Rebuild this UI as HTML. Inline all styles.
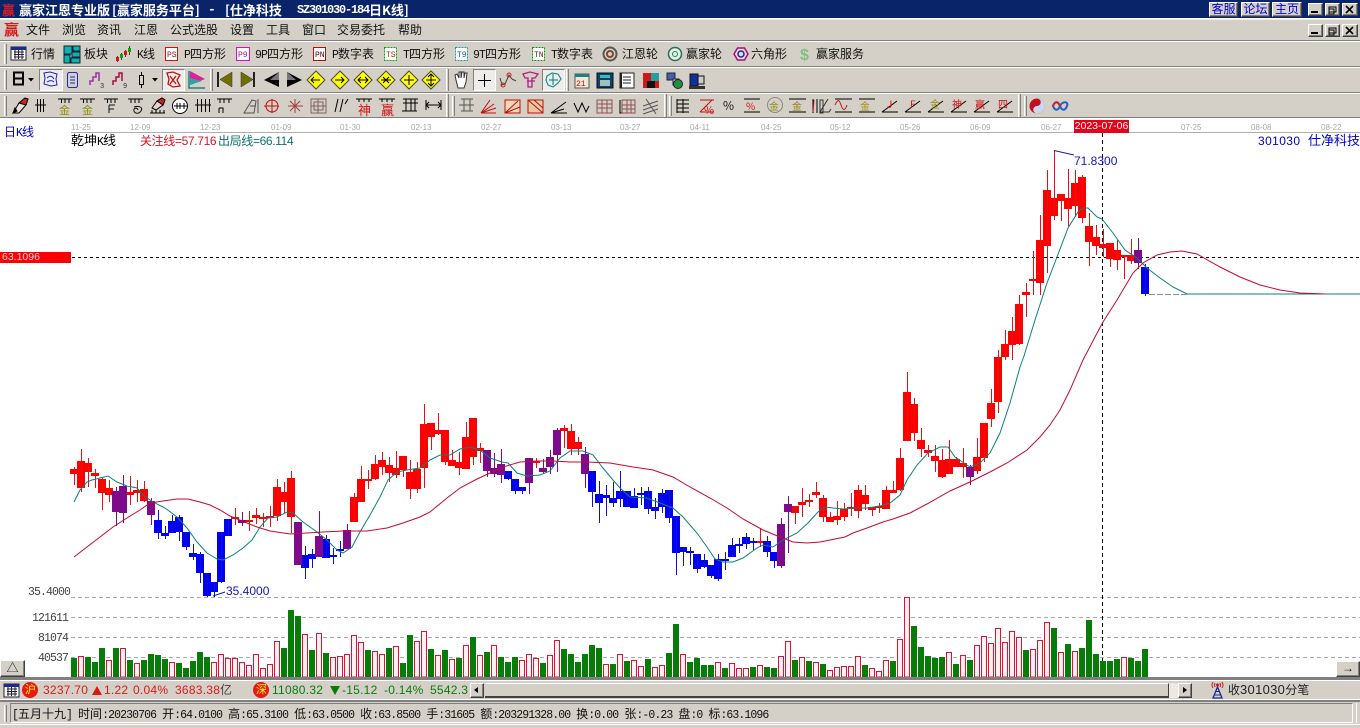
<!DOCTYPE html>
<html><head><meta charset="utf-8"><style>
html,body{margin:0;padding:0}
body{width:1360px;height:728px;background:#d4d0c8;overflow:hidden;position:relative;font:12px/14px "Liberation Sans","WenQuanYi Zen Hei","Noto Sans CJK SC",sans-serif;color:#111}
.t{position:absolute;white-space:pre}
i{font:11.5px/14px "Liberation Mono",monospace;letter-spacing:-.9px;font-style:normal}
.a{position:absolute}
.h{position:absolute;left:0;width:1360px;height:1px;background:#808080;border-bottom:1px solid #fff}
.g{position:absolute;width:1px;border-left:1px solid #fff;border-right:1px solid #808080}
.b{position:absolute;box-sizing:border-box;background:#d4d0c8;border:1px solid;border-color:#fff #404040 #404040 #fff;box-shadow:inset -1px -1px 0 #808080;text-align:center}
.p{position:absolute;box-sizing:border-box;background:#efedea;border:1px solid;border-color:#808080 #fff #fff #808080}
.l{font-size:12px;color:#00c;line-height:13px}
.ax{position:absolute;top:123px;font:8px/9px "Liberation Sans",sans-serif;color:#a8a8a8}
.yl{position:absolute;color:#444;text-align:right;width:40px}
</style></head><body>

<div class="a" style="left:0;top:0;width:1360px;height:18px;background:#0a246a"></div>
<div class="t" style="left:2px;top:3px;color:#e02020;font:bold 13px/14px 'WenQuanYi Zen Hei','Noto Sans CJK SC',sans-serif">赢</div>
<div class="t" style="left:19px;top:2px;color:#fff;font:bold 13px/15px 'WenQuanYi Zen Hei','Noto Sans CJK SC',sans-serif">赢家江恩专业版</div>
<div class="t" style="left:112px;top:2px;color:#fff;font:bold 13px/15px 'WenQuanYi Zen Hei','Noto Sans CJK SC',sans-serif">[赢家服务平台]</div>
<div class="t" style="left:208px;top:2px;color:#fff;font:bold 13px/15px 'Liberation Mono',monospace">-</div>
<div class="t" style="left:225px;top:2px;color:#fff;font:bold 13px/15px 'WenQuanYi Zen Hei','Noto Sans CJK SC',sans-serif">[仕净科技</div>
<div class="t" style="left:297px;top:3px;color:#fff;font:bold 12px/15px 'Liberation Mono',monospace;letter-spacing:-1.2px">SZ301030-184</div>
<div class="t" style="left:369px;top:2px;color:#fff;font:bold 13px/15px 'WenQuanYi Zen Hei','Noto Sans CJK SC',sans-serif">日K线]</div>

<div class="b l" style="left:1209px;top:2px;width:29px;height:15px;color:#0000d0">客服</div>
<div class="b l" style="left:1241px;top:2px;width:29px;height:15px;color:#0000d0">论坛</div>
<div class="b l" style="left:1272px;top:2px;width:30px;height:15px;color:#0000d0">主页</div>
<div class="b" style="left:1308px;top:3px;width:15px;height:13px"></div>
<div class="b" style="left:1325px;top:3px;width:15px;height:13px"></div>
<div class="b" style="left:1342px;top:3px;width:16px;height:13px"></div>
<div class="b" style="left:1308px;top:24px;width:15px;height:13px"></div>
<div class="b" style="left:1325px;top:24px;width:15px;height:13px"></div>
<div class="b" style="left:1342px;top:24px;width:16px;height:13px"></div>

<div class="h" style="top:18px;background:#fff;border-bottom:1px solid #eee"></div>
<div class="h" style="top:40px"></div>
<div class="h" style="top:66px"></div>
<div class="h" style="top:92px"></div>
<div class="h" style="top:117px"></div>

<div class="t" style="left:4px;top:21px;color:#d01818;font:bold 15px/18px 'WenQuanYi Zen Hei','Noto Sans CJK SC',sans-serif">赢</div>
<div class="t" style="left:26px;top:23px">文件</div>
<div class="t" style="left:62px;top:23px">浏览</div>
<div class="t" style="left:97px;top:23px">资讯</div>
<div class="t" style="left:134px;top:23px">江恩</div>
<div class="t" style="left:170px;top:23px">公式选股</div>
<div class="t" style="left:230px;top:23px">设置</div>
<div class="t" style="left:266px;top:23px">工具</div>
<div class="t" style="left:302px;top:23px">窗口</div>
<div class="t" style="left:337px;top:23px">交易委托</div>
<div class="t" style="left:398px;top:23px">帮助</div>

<div class="t" style="left:31px;top:47px">行情</div>
<div class="t" style="left:84px;top:47px">板块</div>
<div class="t" style="left:137px;top:47px"><i>K</i>线</div>
<div class="t" style="left:184px;top:47px"><i>P</i>四方形</div>
<div class="t" style="left:255px;top:47px"><i>9P</i>四方形</div>
<div class="t" style="left:332px;top:47px"><i>P</i>数字表</div>
<div class="t" style="left:403px;top:47px"><i>T</i>四方形</div>
<div class="t" style="left:473px;top:47px"><i>9T</i>四方形</div>
<div class="t" style="left:551px;top:47px"><i>T</i>数字表</div>
<div class="t" style="left:622px;top:47px">江恩轮</div>
<div class="t" style="left:686px;top:47px">赢家轮</div>
<div class="t" style="left:751px;top:47px">六角形</div>
<div class="t" style="left:816px;top:47px">赢家服务</div>

<div class="g" style="left:4px;top:44px;height:20px"></div>
<div class="g" style="left:4px;top:70px;height:20px"></div>
<div class="g" style="left:4px;top:96px;height:20px"></div>
<div class="g" style="left:210px;top:69px;height:22px"></div>
<div class="g" style="left:446px;top:69px;height:22px"></div>
<div class="g" style="left:566px;top:69px;height:22px"></div>
<div class="g" style="left:446px;top:94px;height:23px"></div>
<div class="g" style="left:452px;top:96px;height:20px"></div>
<div class="g" style="left:664px;top:94px;height:23px"></div>
<div class="g" style="left:669px;top:96px;height:20px"></div>
<div class="g" style="left:1018px;top:94px;height:23px"></div>
<div class="g" style="left:1024px;top:96px;height:20px"></div>

<div class="p" style="left:39px;top:69px;width:24px;height:22px"></div>
<div class="p" style="left:162px;top:69px;width:23px;height:22px"></div>
<div class="p" style="left:473px;top:69px;width:23px;height:22px"></div>
<div class="p" style="left:542px;top:69px;width:23px;height:22px"></div>

<svg class="a" style="left:0;top:0" width="1360" height="120" viewBox="0 0 1360 120" fill="none" font-family="Liberation Mono,monospace">
<path d="M1311 12h7M1311 33h7" stroke="#000" stroke-width="2"/>
<path d="M1329 7h7v5h-7zM1329 9h5v5h-5zM1329 28h7v5h-7zM1329 30h5v5h-5z" stroke="#000" fill="#d4d0c8"/>
<path d="M1346 6l7 7M1353 6l-7 7M1346 27l7 7M1353 27l-7 7" stroke="#000" stroke-width="1.6"/>

<path d="M11 47h15v13h-15z" fill="#fff" stroke="#223"/><path d="M11 47h15v3h-15z" fill="#1a2a90"/><path d="M14 52h10M14 54.500h10M14 57h10M15 50v9M18.500 50v9M22 50v9" stroke="#223"/>
<path d="M64 46h8v8h-8zM73 46h7v5h-7zM64 55h6v8h-6zM72 52h8v5h-8zM71 58h9v5h-9z" fill="#10b0b0" stroke="#123"/>
<path d="M117.500 56v6M121.500 53v7M125.500 50v7M129.500 46v9" stroke="#444"/><path d="M116 57h3v4h-3zM124 51h3v4h-3z" fill="#e01010"/><path d="M120 54h3v4h-3zM128 48h3v4h-3z" fill="#10a010"/>
<path d="M165.500 47.500h12v13h-12z" stroke="#d01010" fill="#fff"/><path d="M236.500 47.500h13v13h-13z" stroke="#d010d0" fill="#fff"/><path d="M313.500 47.500h12v13h-12z" stroke="#b01010" fill="#fff"/>
<path d="M384.500 47.500h12v13h-12z" stroke="#10a010" stroke-dasharray="2 1" fill="#fff"/><path d="M455.500 47.500h12v13h-12z" stroke="#10a0a0" stroke-dasharray="2 1" fill="#fff"/><path d="M532.500 47.500h12v13h-12z" stroke="#109010" stroke-dasharray="2 1" fill="#fff"/>
<g font-size="8" fill="#a01010"><text x="167" y="57">PS</text><text x="238" y="57" fill="#a010a0">P9</text><text x="315" y="57" fill="#600">PN</text><text x="386" y="57" fill="#904010">TS</text><text x="457" y="57" fill="#106090">T9</text><text x="534" y="57" fill="#403010">TN</text></g>
<circle cx="610" cy="54" r="6.500" stroke="#555" stroke-width="2" fill="#d8d4b0"/><circle cx="610" cy="54" r="3" stroke="#804040" stroke-width="2"/>
<circle cx="675" cy="54" r="6.500" stroke="#207060" fill="#e8f0e0" stroke-width="1.500"/><circle cx="675" cy="54" r="2.500" stroke="#208060"/>
<path d="M734 54l3.500-6h7l3.500 6-3.500 6h-7z" stroke="#a01070" stroke-width="1.500" fill="#e8d8e8"/><circle cx="741" cy="54" r="3" stroke="#103090" stroke-width="1.500"/>
<text x="800" y="60" font-family="Liberation Sans,sans-serif" font-weight="bold" font-size="16" fill="#80c080">$</text>

<path d="M14 72.500h9v12h-9zM14 78.500h9" stroke="#000" stroke-width="2"/>
<path d="M28 78h6l-3 3.500zM152 78h6l-3 3.500z" fill="#000"/>
<path d="M44 73l6-1 7 2-1 5 1 6-6 1-7-2 1-6zM47 78c3-3 5-2 7 1M47 82c3-2 5-2 7 0" stroke="#2020c0"/>
<path d="M67.500 74.500q0-2 2-2h6q2 0 2 2v11q0 2-2 2h-6q-2 0-2-2zM70 77h5M70 80h5M70 83h5" stroke="#2030b0"/>
<path d="M90 85v-4h3v-4h3v-4h3v8" stroke="#a030a0" stroke-width="1.500"/><path d="M113 85v-4h3v-4h3v-4h3v8" stroke="#a01040" stroke-width="1.500"/>
<text x="100" y="88" font-size="7" fill="#303030">3</text><text x="123" y="88" font-size="7" fill="#303030">9</text>
<path d="M141.500 72v3M141.500 85v3M139.500 75.500h4v9h-4z" stroke="#000"/>
<path d="M167 73l6-1 7 3-3 5 3 6-7 1-5-3 1-5zM170 76l6 8M176 76l-6 8" stroke="#c01010" stroke-width="1.300"/>
<path d="M189 71v17h16" stroke="#208080" stroke-width="1.500"/><path d="M190 71l15 8-15 6z" fill="#e020a0"/><path d="M190 78l12 3-12 4z" fill="#30a0a0"/>
<path d="M218 72v15" stroke="#222" stroke-width="2"/><path d="M232 72v15l-12-7.500z" fill="#6f6f00" stroke="#333" stroke-width=".5"/>
<path d="M254 72v15" stroke="#222" stroke-width="2"/><path d="M241 72v15l12-7.500z" fill="#6f6f00" stroke="#333" stroke-width=".5"/>
<path d="M279 72l-15 8 15 7z" fill="#000"/><path d="M279 72l-9 8h9z" fill="#777"/>
<path d="M287 72l15 8-15 7z" fill="#000"/><path d="M287 72l9 8h-9z" fill="#777"/>
<g fill="#ffff00" stroke="#444"><path d="M316 71l9 9-9 9-9-9z"/><path d="M340 71l9 9-9 9-9-9z"/><path d="M363 71l9 9-9 9-9-9z"/><path d="M386 71l9 9-9 9-9-9z"/><path d="M409 71l9 9-9 9-9-9z"/><path d="M431 71l9 9-9 9-9-9z"/></g>
<path d="M311 80h9M314 77l-3 3 3 3M335 80h9M341 77l3 3-3 3M358 80h10M361 77l-3 3 3 3M365 77l3 3-3 3M381 80h10M383 77l3 3 3-3M383 83l3-3 3 3M409 75v10M404 80h10M431 75v10M426 80h10M428 77l3-3 3 3M428 83l3 3 3-3" stroke="#000"/>
<path d="M456 80l-1-5 2-1 2 4v-6h2v6l1-6h2v6l1-5h2l-1 9-2 6h-6z" stroke="#333" fill="#fff"/>
<path d="M484.500 74v13M478 80.500h13" stroke="#000"/>
<path d="M500 78l2 7 3-1 4-9 3 4 4 2" stroke="#404040"/><circle cx="503" cy="85" r="2" stroke="#d02020"/><circle cx="509" cy="75" r="2" stroke="#d02020"/>
<path d="M523 74l7-2 8 2-3 4h-3v9h-4v-9h-3zM527 81h8" stroke="#b02080" stroke-width="1.300"/>
<path d="M547 76l5-3 6 1 3 5-3 4-5 4-5-2-2-5zM549 80h9M553 74v11" stroke="#209090" stroke-width="1.200"/>
<path d="M575 74h14v14h-14z" fill="#f0e8d8" stroke="#555"/><path d="M575 74h14v3h-14z" fill="#208080"/><text x="576" y="86" font-size="8" fill="#c01010">21</text>
<path d="M597 73h16v15h-16z" fill="#104060" stroke="#012"/><path d="M600 75h10v3h-10z" fill="#30c0c0"/><path d="M600 80h10v6h-10z" fill="#a0c0c0"/>
<path d="M620 73h14v15h-14z" fill="#fff" stroke="#222"/><path d="M623 77h8M623 80h8M623 83h8" stroke="#222"/><path d="M621 73v15" stroke="#222" stroke-width="2"/>
<path d="M643 73h16v15h-16z" fill="#d01818"/><path d="M651 73h8v8h-8z" fill="#20a0a0"/><path d="M647 81h8v7h-8z" fill="#111"/>
<path d="M667 73h8v7h-8z" fill="#4060b0" stroke="#223"/><path d="M673 79h6v6h-6z" fill="#fff" stroke="#223"/><circle cx="678" cy="84" r="4.500" fill="#209040" stroke="#222"/>
<path d="M690 74h8v12h-8z" fill="#1030a0" stroke="#111"/><path d="M698 76h6v8h-6z" fill="#ccc" stroke="#111"/><path d="M689 86h16v3h-16z" fill="#333"/>

<g stroke="#000">
<path d="M13 113l6-10 6-5 3 1-2 6-7 8z" fill="#f0e0d8"/><path d="M19 103l6-5 3 1-2 6z" fill="#d02020"/><path d="M13 113l2-5 2 3z" fill="#000"/>
<path d="M35 105h11M37.500 99v13M40.500 99v13M43.500 99v13M58 99h14M80 99h15M61.500 99v4M65 99v4M69 99v4M83.500 99v4M87 99v4M91 99v4M104 99h14M107.500 99v4M111 99v4M115 99v4M128 99h15M131 99v4M135 99v4M139 99v4"/>
<path d="M134 107c6-2 9 1 7 4s-6 3-7 0 3-4 4-1" stroke="#111"/><path d="M109 105h6M109 105v8M109 109h5" stroke="#111"/>
<path d="M150 113h15M152 110v3M156 110v3M160 110v3M164 110v3"/><path d="M152 108l5-7 5-3 3 2-2 5-7 5z" fill="#e8d0d0"/><path d="M157 101l5-3 3 2-2 5z" fill="#d02020"/>
<circle cx="180" cy="106" r="7.500" fill="#fff"/><path d="M174 106h13M177 103v6M180 103v6M184 103v6"/>
<path d="M195 105h16M197.500 99v13M201.500 99v13M205.500 99v13M209.500 99v13M217 99h15M220 99v4M224 99v4M229 99v4M219 108v5M219 108h4v5"/>
<path d="M244 113l8-13 4 1-2 12zM250 106h6M258 99v14" stroke="#555"/>
<path d="M461 99h12M461 111h12M464 99v12M470 99v12M459 105h15" stroke="#555"/><path d="M335 112l3-13M340 112l3-13M345 104l3-5"/>
<path d="M356 99h16M379 99h16M359 99v3M364 99v3M369 99v3M382 99v3M387 99v3M392 99v3"/>
<path d="M403 99h15M403 103h15M406 99v12M411 99v12M415 99v12M402 111h15"/>
<path d="M426 105h15M426 100v10M441 100v10M429 102l-3 3 3 3M438 102l3 3-3 3"/>
<path d="M551 113l15-11M551 113l13-4M551 113h16M574 103l4 9 4-9 4 9 3-6M620 100v13h15"/>
<path d="M643 106l15-5M643 110l15-5M643 114l15-5M646 99l10 15" stroke="#555"/>
<path d="M677 99v14M677 100h12M677 104h12M677 108h12M677 112h12M683 99v14"/>
<path d="M744 112h16M744 99h16M789 112h17M789 99h17M835 99h17M835 112h17M859 99h16M859 112h16M882 112l15-11M882 112h16M905 112l15-11M905 112h16M928 112l15-11M928 112h16M951 112l15-11M951 112h16M974 112l15-11M974 112h16M997 112l15-11M997 112h16" />
<path d="M813 99v14M817 99v14"/>
</g>
<g stroke="#c01010">
<path d="M264 106h15M272 99v14" /><circle cx="272" cy="106" r="6"/><path d="M288 106h15M295 99v14M290 101l10 10M300 101l-10 10" stroke="#a04040"/>
<path d="M311 99h15v14h-15zM314 102h9v8h-9zM318 99v14M311 106h15" stroke="#806060"/>
<path d="M481 113l9-13M481 113l13-9M481 113l15-5M481 113h15"/>
<path d="M505 100h15v13h-15zM505 113l13-12M505 113l15-6" fill="#f0d8b0"/><path d="M528 100h15v13h-15zM528 100l15 13M534 100l9 8" fill="#e8c8a0"/>
<path d="M597 100h15v13h-15zM597 104h15M597 108h15M602 100v13M607 100v13" stroke="#905050"/><path d="M622 100h13v13h-13zM622 105h13M622 109h13M627 100v13M631 100v13" stroke="#905050"/>
<path d="M700 112l12-12M700 100h14M700 112h14"/><path d="M835 105c3-6 4-6 6 0s4 6 6 0M813 112l1-12"/>
</g>
<g font-family="WenQuanYi Zen Hei,Noto Sans CJK SC,sans-serif" font-size="11">
<text x="59" y="114" fill="#909010">金</text><text x="82" y="114" fill="#909010">金</text><text x="358" y="115" fill="#e01010" font-size="13">神</text><text x="381" y="115" fill="#d01010" font-size="13">赢</text>
<text x="769" y="110" fill="#909010" font-size="10">金</text><text x="792" y="110" fill="#908010" font-size="10">金</text><text x="860" y="110" fill="#a09010" font-size="10">金</text><text x="910" y="108" fill="#e01010" font-size="10">F</text><text x="887" y="108" fill="#e01010" font-size="10">J</text><text x="930" y="108" fill="#909010" font-size="10">金</text><text x="952" y="108" fill="#d01010" font-size="10">神</text><text x="975" y="108" fill="#d01010" font-size="10">赢</text><text x="998" y="108" fill="#d01010" font-size="10">四</text>
<text x="704" y="114" fill="#d01010" font-size="11">%</text><text x="723" y="110" fill="#111" font-size="12">%</text><text x="746" y="110" fill="#d01010" font-size="10">%</text></g>
<circle cx="775" cy="105" r="7.500" stroke="#888" fill="none"/>
<circle cx="1037" cy="106" r="7.500" fill="#c01020"/><path d="M1037 98.500a7.500 7.500 0 0 1 0 15a3.700 3.700 0 0 1 0-7.500a3.700 3.700 0 0 0 0-7.500z" fill="#c8d8f0"/>
<path d="M1053 106c2-5 5-5 7 0s5 5 7 0-5-5-7 0-5 5-7 0z" stroke="#2060c0" stroke-width="2"/><path d="M1053 106c2-5 5-5 7 0" stroke="#d02020" stroke-width="2"/>
<path d="M820 100h3v13h-3zM828 99l-8 13h9l2-3" stroke="#333"/>
</svg>

<div class="a" style="left:0;top:119px;width:1360px;height:558px;background:#fff"></div>
<div class="a" style="left:71px;top:132px;width:1289px;height:1px;background:#b0b0b0"></div>
<div class="ax" style="left:71px">11-25</div><div class="ax" style="left:130px">12-09</div><div class="ax" style="left:200px">12-23</div><div class="ax" style="left:271px">01-09</div><div class="ax" style="left:340px">01-30</div><div class="ax" style="left:411px">02-13</div><div class="ax" style="left:481px">02-27</div><div class="ax" style="left:551px">03-13</div><div class="ax" style="left:620px">03-27</div><div class="ax" style="left:690px">04-11</div><div class="ax" style="left:761px">04-25</div><div class="ax" style="left:830px">05-12</div><div class="ax" style="left:900px">05-26</div><div class="ax" style="left:970px">06-09</div><div class="ax" style="left:1041px">06-27</div><div class="ax" style="left:1181px">07-25</div><div class="ax" style="left:1251px">08-08</div><div class="ax" style="left:1321px">08-22</div>
<div class="a" style="left:1074px;top:120px;width:55px;height:13px;background:#e8001a;color:#fff;font:10.500px/13px 'Liberation Sans',sans-serif;text-align:center">2023-07-06</div>

<div class="t" style="left:4px;top:125px;color:#0000d0">日<i>K</i>线</div>
<div class="t" style="left:71px;top:134px;color:#000;font-size:13px">乾坤<i>K</i>线</div>
<div class="t" style="left:140px;top:134px;color:#e01020;letter-spacing:-.35px">关注线=57.716</div>
<div class="t" style="left:218px;top:134px;color:#107070;letter-spacing:-.35px">出局线=66.114</div>
<div class="t" style="left:1258px;top:134px;color:#0000c8;letter-spacing:.4px">301030</div>
<div class="t" style="left:1308px;top:134px;color:#0000c8;font-size:13px">仕净科技</div>

<svg class="a" style="left:0;top:0" width="1360" height="680" viewBox="0 0 1360 680" fill="none" shape-rendering="crispEdges">
<path d="M71 597.500H1360M71 617.500H1360M71 637.500H1360M71 657.500H1360" stroke="#a8a8a8" stroke-dasharray="4 3"/>
<path d="M72 257.500H1360" stroke="#000" stroke-dasharray="3 3"/>
<path d="M1102.500 133V677" stroke="#000" stroke-dasharray="4 3"/>

<path fill="#087c08" d="M71 658h6V677h-6zM85 657h6V677h-6zM92 662h6V677h-6zM99 648h6V677h-6zM113 648h6V677h-6zM127 660h6V677h-6zM141 660h6V677h-6zM148 654h6V677h-6zM155 655h6V677h-6zM162 659h6V677h-6zM176 663h6V677h-6zM183 668h6V677h-6zM190 661h6V677h-6zM197 652h6V677h-6zM204 657h6V677h-6zM281 648h6V677h-6zM288 610h6V677h-6zM295 616h6V677h-6zM309 650h6V677h-6zM323 653h6V677h-6zM365 650h6V677h-6zM386 648h6V677h-6zM400 663h6V677h-6zM407 635h6V677h-6zM428 649h6V677h-6zM442 650h6V677h-6zM456 658h6V677h-6zM470 637h6V677h-6zM484 652h6V677h-6zM498 657h6V677h-6zM505 662h6V677h-6zM512 657h6V677h-6zM540 663h6V677h-6zM561 649h6V677h-6zM568 654h6V677h-6zM575 662h6V677h-6zM582 654h6V677h-6zM589 645h6V677h-6zM596 648h6V677h-6zM610 664h6V677h-6zM624 661h6V677h-6zM645 659h6V677h-6zM666 653h6V677h-6zM673 624h6V677h-6zM687 662h6V677h-6zM694 658h6V677h-6zM701 665h6V677h-6zM708 665h6V677h-6zM722 668h6V677h-6zM750 667h6V677h-6zM764 667h6V677h-6zM771 668h6V677h-6zM792 660h6V677h-6zM806 661h6V677h-6zM820 664h6V677h-6zM862 665h6V677h-6zM890 661h6V677h-6zM911 626h6V677h-6zM918 647h6V677h-6zM925 656h6V677h-6zM932 658h6V677h-6zM939 657h6V677h-6zM953 664h6V677h-6zM967 660h6V677h-6zM1023 650h6V677h-6zM1051 628h6V677h-6zM1065 644h6V677h-6zM1079 648h6V677h-6zM1086 620h6V677h-6zM1093 654h6V677h-6zM1100 661h6V677h-6zM1107 661h6V677h-6zM1114 659h6V677h-6zM1128 658h6V677h-6zM1135 661h6V677h-6zM1142 649h6V677h-6z"/>
<path fill="#fff0f2" stroke="#dc1434" d="M78.500 656.500h5V677h-5zM106.500 660.500h5V677h-5zM120.500 648.500h5V677h-5zM134.500 663.500h5V677h-5zM169.500 662.500h5V677h-5zM211.500 662.500h5V677h-5zM218.500 654.500h5V677h-5zM225.500 658.500h5V677h-5zM232.500 658.500h5V677h-5zM239.500 662.500h5V677h-5zM246.500 665.500h5V677h-5zM253.500 654.500h5V677h-5zM260.500 668.500h5V677h-5zM267.500 664.500h5V677h-5zM274.500 641.500h5V677h-5zM302.500 634.500h5V677h-5zM316.500 633.500h5V677h-5zM330.500 657.500h5V677h-5zM337.500 656.500h5V677h-5zM344.500 654.500h5V677h-5zM351.500 635.500h5V677h-5zM358.500 642.500h5V677h-5zM372.500 651.500h5V677h-5zM379.500 654.500h5V677h-5zM393.500 646.500h5V677h-5zM414.500 641.500h5V677h-5zM421.500 631.500h5V677h-5zM435.500 655.500h5V677h-5zM449.500 659.500h5V677h-5zM463.500 645.500h5V677h-5zM477.500 655.500h5V677h-5zM491.500 645.500h5V677h-5zM519.500 660.500h5V677h-5zM526.500 654.500h5V677h-5zM533.500 658.500h5V677h-5zM547.500 655.500h5V677h-5zM554.500 640.500h5V677h-5zM603.500 664.500h5V677h-5zM617.500 654.500h5V677h-5zM631.500 660.500h5V677h-5zM638.500 666.500h5V677h-5zM652.500 667.500h5V677h-5zM659.500 665.500h5V677h-5zM680.500 654.500h5V677h-5zM715.500 662.500h5V677h-5zM729.500 663.500h5V677h-5zM736.500 668.500h5V677h-5zM743.500 668.500h5V677h-5zM757.500 665.500h5V677h-5zM778.500 656.500h5V677h-5zM785.500 641.500h5V677h-5zM799.500 657.500h5V677h-5zM813.500 662.500h5V677h-5zM827.500 670.500h5V677h-5zM834.500 667.500h5V677h-5zM841.500 666.500h5V677h-5zM848.500 666.500h5V677h-5zM855.500 656.500h5V677h-5zM869.500 668.500h5V677h-5zM876.500 671.500h5V677h-5zM883.500 660.500h5V677h-5zM897.500 639.500h5V677h-5zM904.500 597.500h5V677h-5zM946.500 652.500h5V677h-5zM960.500 655.500h5V677h-5zM974.500 645.500h5V677h-5zM981.500 636.500h5V677h-5zM988.500 643.500h5V677h-5zM995.500 628.500h5V677h-5zM1002.500 642.500h5V677h-5zM1009.500 631.500h5V677h-5zM1016.500 637.500h5V677h-5zM1030.500 649.500h5V677h-5zM1037.500 640.500h5V677h-5zM1044.500 622.500h5V677h-5zM1058.500 652.500h5V677h-5zM1072.500 651.500h5V677h-5zM1121.500 657.500h5V677h-5z"/>

<path fill="#ff0000" d="M70 469h8v5h-8zM77 461h8v27h-8zM84 463h8v9h-8zM91 473h8v3h-8zM98 479h8v14h-8zM105 488h8v7h-8zM126 492h8v3h-8zM133 490h8v3h-8zM140 489h8v12h-8zM231 517h8v2h-8zM245 520h8v2h-8zM252 515h8v3h-8zM259 517h8v2h-8zM266 516h8v2h-8zM273 487h8v29h-8zM280 492h8v10h-8zM287 478h8v39h-8zM350 497h8v25h-8zM357 479h8v23h-8zM364 479h8v2h-8zM371 464h8v15h-8zM378 460h8v7h-8zM385 465h8v8h-8zM392 468h8v7h-8zM399 456h8v14h-8zM406 472h8v17h-8zM413 469h8v20h-8zM420 424h8v44h-8zM427 423h8v14h-8zM434 430h8v4h-8zM441 430h8v32h-8zM448 460h8v6h-8zM455 462h8v6h-8zM462 437h8v32h-8zM469 418h8v39h-8zM476 448h8v3h-8zM532 461h8v2h-8zM560 428h8v3h-8zM567 431h8v18h-8zM574 442h8v7h-8zM756 541h8v2h-8zM791 506h8v7h-8zM798 502h8v3h-8zM805 500h8v2h-8zM812 492h8v3h-8zM819 498h8v19h-8zM826 517h8v5h-8zM833 516h8v4h-8zM840 509h8v8h-8zM847 507h8v2h-8zM854 490h8v21h-8zM861 495h8v9h-8zM868 507h8v3h-8zM875 506h8v2h-8zM882 490h8v19h-8zM889 490h8v3h-8zM896 458h8v32h-8zM903 392h8v49h-8zM910 404h8v29h-8zM917 440h8v9h-8zM924 450h8v3h-8zM931 456h8v5h-8zM938 460h8v17h-8zM945 459h8v15h-8zM952 459h8v8h-8zM959 463h8v4h-8zM973 457h8v14h-8zM980 423h8v35h-8zM987 403h8v16h-8zM994 357h8v45h-8zM1001 344h8v13h-8zM1008 331h8v14h-8zM1015 304h8v40h-8zM1022 292h8v3h-8zM1029 279h8v2h-8zM1036 240h8v43h-8zM1043 190h8v56h-8zM1050 198h8v18h-8zM1057 194h8v7h-8zM1064 198h8v11h-8zM1071 183h8v23h-8zM1078 177h8v41h-8zM1085 226h8v16h-8zM1092 237h8v9h-8zM1099 244h8v4h-8zM1106 243h8v16h-8zM1113 250h8v10h-8zM1120 255h8v2h-8zM1127 255h8v6h-8z"/>
<path stroke="#e81010" d="M74.500 467V485M81.500 449V492M88.500 458V487M95.500 469V488M102.500 477V510M109.500 480V502M130.500 476V505M137.500 480V502M144.500 481V502M235.500 508V525M249.500 511V531M256.500 508V524M263.500 513V527M270.500 506V527M277.500 479V521M284.500 482V513M291.500 471V533M354.500 493V522M361.500 466V502M368.500 470V489M375.500 455V480M382.500 452V475M389.500 457V482M396.500 451V478M403.500 456V477M410.500 460V499M417.500 462V493M424.500 404V488M431.500 423V450M438.500 413V435M445.500 430V465M452.500 450V466M459.500 452V475M466.500 422V469M473.500 418V465M480.500 443V463M536.500 458V468M564.500 425V448M571.500 424V455M578.500 437V455M760.500 528V547M795.500 506V524M802.500 488V517M809.500 494V507M816.500 482V498M823.500 495V522M830.500 512V522M837.500 501V525M844.500 503V521M851.500 493V516M858.500 485V518M865.500 485V510M872.500 507V516M879.500 503V513M886.500 486V509M893.500 481V493M900.500 448V491M907.500 372V441M914.500 398V441M921.500 428V457M928.500 445V457M935.500 445V472M942.500 449V478M949.500 440V474M956.500 457V467M963.500 448V478M977.500 438V474M984.500 423V462M991.500 389V427M998.500 350V413M1005.500 330V360M1012.500 317V360M1019.500 295V345M1026.500 283V317M1033.500 251V295M1040.500 215V295M1047.500 170V273M1054.500 150V220M1061.500 194V221M1068.500 169V226M1075.500 170V217M1082.500 175V223M1089.500 213V266M1096.500 225V255M1103.500 229V257M1110.500 243V267M1117.500 240V270M1124.500 255V279M1131.500 239V264"/>

<path fill="#0000f4" d="M154 520h8v13h-8zM161 533h8v3h-8zM168 521h8v12h-8zM175 517h8v15h-8zM182 532h8v15h-8zM189 553h8v4h-8zM196 554h8v19h-8zM203 573h8v23h-8zM210 582h8v10h-8zM217 532h8v50h-8zM224 519h8v17h-8zM301 555h8v13h-8zM308 554h8v5h-8zM322 539h8v19h-8zM329 555h8v2h-8zM336 549h8v2h-8zM504 471h8v8h-8zM511 479h8v12h-8zM518 487h8v4h-8zM588 471h8v21h-8zM595 494h8v9h-8zM602 495h8v3h-8zM609 498h8v5h-8zM616 491h8v8h-8zM623 491h8v16h-8zM630 496h8v12h-8zM637 493h8v2h-8zM644 491h8v18h-8zM651 507h8v4h-8zM658 493h8v14h-8zM665 490h8v28h-8zM672 516h8v37h-8zM679 547h8v5h-8zM686 551h8v2h-8zM693 554h8v15h-8zM700 560h8v7h-8zM707 565h8v11h-8zM714 559h8v20h-8zM721 559h8v2h-8zM728 545h8v12h-8zM735 544h8v2h-8zM742 537h8v7h-8zM749 541h8v2h-8zM763 541h8v11h-8zM770 552h8v9h-8zM1141 267h8v27h-8z"/>
<path stroke="#1010c8" d="M158.500 510V539M165.500 526V539M172.500 515V533M179.500 515V541M186.500 532V550M193.500 544V560M200.500 552V583M207.500 573V597M214.500 582V597M221.500 532V583M228.500 519V536M305.500 546V579M312.500 549V568M326.500 535V558M333.500 548V564M340.500 541V557M508.500 471V480M515.500 479V494M522.500 487V494M592.500 471V507M599.500 481V523M606.500 485V516M613.500 482V507M620.500 471V507M627.500 491V507M634.500 488V508M641.500 487V505M648.500 487V514M655.500 498V519M662.500 489V513M669.500 490V523M676.500 516V575M683.500 547V566M690.500 547V565M697.500 554V573M704.500 554V568M711.500 565V578M718.500 554V581M725.500 552V570M732.500 538V557M739.500 538V553M746.500 533V549M753.500 538V550M767.500 536V557M774.500 552V568M1145.500 264V296"/>

<path fill="#7e0a8c" d="M112 491h8v21h-8zM119 486h8v27h-8zM147 501h8v14h-8zM238 520h8v3h-8zM294 522h8v43h-8zM315 536h8v21h-8zM343 530h8v19h-8zM483 450h8v21h-8zM490 468h8v6h-8zM497 464h8v11h-8zM525 458h8v25h-8zM539 468h8v4h-8zM546 457h8v10h-8zM553 430h8v25h-8zM581 454h8v20h-8zM777 524h8v42h-8zM784 504h8v8h-8zM966 467h8v10h-8zM1134 250h8v13h-8z"/>
<path stroke="#7e0a8c" d="M116.500 487V526M123.500 475V523M151.500 498V525M242.500 512V526M298.500 522V565M319.500 511V557M347.500 524V549M487.500 450V477M494.500 453V477M501.500 449V483M529.500 458V494M543.500 459V473M550.500 450V474M557.500 428V472M585.500 447V488M781.500 518V568M788.500 496V553M970.500 465V485M1138.500 238V269"/>

<g shape-rendering="auto">
<path stroke="#0a8080" d="M74 502L80 490L87 482L92 480L100 478L108 476L117 482L127 486L137 488L143 495L153 502L165 508L177 517L187 528L197 542L207 553L217 559L223 560L233 555L243 548L252 540L260 527L268 518L277 517L287 512L293 513L303 522L317 532L327 540L337 550L343 553L352 547L360 532L370 515L380 497L388 480L397 472L407 470L420 468L430 460L440 455L450 455L460 449L470 447L480 450L490 458L502 462L508 463L517 473L527 476L540 475L550 471L560 458L570 451L583 451L593 455L603 468L613 480L620 488L630 497L647 498L660 503L673 508L683 517L697 533L707 547L715 559L723 562L733 562L743 558L757 548L763 545L773 547L783 540L797 533L808 523L818 512L825 507L833 508L843 509L855 508L867 508L880 506L890 503L900 495L907 480L917 465L928 453L940 447L948 447L955 457L970 467L980 463L990 453L1000 433L1010 403L1020 367L1024 356L1035 320L1047 283L1057 257L1068 228L1078 212L1083 208L1088 208L1097 217L1102 219L1113 233L1125 250L1137 258L1147 268L1160 278L1173 287L1187 294H1360"/>
<path stroke="#c40a30" d="M74 557L87 547L100 537L113 527L127 518L140 510L150 503L163 501L177 499L188 499L200 502L210 505L220 510L230 516L242 521L257 527L270 531L290 534L307 533L323 532L343 531L367 531L387 528L403 523L420 517L430 512L447 498L460 488L477 479L490 473L503 467L520 462L537 461L553 461L570 462L587 462L610 463L633 467L653 470L673 477L690 487L710 498L727 508L743 519L763 530L780 537L793 542L807 543L820 542L845 537L853 533L867 528L883 522L893 519L910 513L927 504L950 491L970 482L990 472L1007 463L1027 450L1040 437L1050 425L1060 410L1070 390L1083 360L1095 337L1103 322L1117 300L1133 273L1143 263L1157 255L1170 252L1182 251L1197 254L1220 267L1240 277L1260 285L1280 290L1300 293L1325 294"/>
<path stroke="#909090" stroke-dasharray="6 2" d="M1149 294.500H1187"/>
<path stroke="#1a1ab0" d="M1054 150.500L1074 155M213 596L225 592"/>
</g>
</svg>

<div class="t" style="left:1074px;top:154px;color:#1414c0">71.8300</div>
<div class="t" style="left:226px;top:584px;color:#1414c0">35.4000</div>

<div class="a" style="left:0;top:252px;width:71px;height:11px;background:#f00;color:#ddd;font:10.500px/11px 'Liberation Sans',sans-serif;padding-left:2px;box-sizing:border-box">63.1096</div>

<div class="yl" style="left:28px;top:584px"><i>35.4000</i></div>
<div class="yl" style="left:28px;top:610px"><i>121611</i></div>
<div class="yl" style="left:28px;top:630px"><i>81074</i></div>
<div class="yl" style="left:28px;top:650px"><i>40537</i></div>

<div class="b" style="left:0;top:660px;width:25px;height:17px;font-size:12px;line-height:14px">△</div>
<div class="b" style="left:1336px;top:661px;width:24px;height:16px;font-size:12px;line-height:13px">→</div>

<div class="a" style="left:0;top:677px;width:1360px;height:3px;background:#808080"></div>
<div class="a" style="left:0;top:680px;width:1360px;height:1px;background:#fff"></div>
<div class="a" style="left:0;top:699px;width:1360px;height:1px;background:#fff"></div>
<div class="a" style="left:0;top:700px;width:1360px;height:2px;background:#808080"></div>

<svg class="a" style="left:0;top:681px" width="470" height="18" viewBox="0 0 470 18" fill="none">
<path d="M4 3h15v13h-15z" fill="#fff" stroke="#223"/><path d="M4 3h15v3h-15z" fill="#1a2a90"/><path d="M7 8h10M7 10.500h10M7 13h10M8 6v9M11.500 6v9M15 6v9" stroke="#223"/>
<circle cx="30" cy="9" r="8" fill="#e81818"/><circle cx="261" cy="9" r="8" fill="#e81818"/>
<path d="M92 14l5-9 5 9z" fill="#d81818"/><path d="M330 5h10l-5 9z" fill="#087c08"/>
</svg>
<div class="t" style="left:25px;top:683px;color:#ff0;font-size:11px">沪</div>
<div class="t" style="left:256px;top:683px;color:#ff0;font-size:11px">深</div>
<div class="t" style="left:43px;top:683px;color:#e01818;letter-spacing:.25px;font-size:12px">3237.70</div>
<div class="t" style="left:104px;top:683px;color:#e01818;letter-spacing:.25px">1.22</div>
<div class="t" style="left:133px;top:683px;color:#e01818;letter-spacing:.25px">0.04%</div>
<div class="t" style="left:175px;top:683px;color:#e01818;letter-spacing:.25px">3683.38</div>
<div class="t" style="left:220px;top:683px;color:#444">亿</div>
<div class="t" style="left:272px;top:683px;color:#087c08;letter-spacing:.25px">11080.32</div>
<div class="t" style="left:342px;top:683px;color:#087c08;letter-spacing:.25px">-15.12</div>
<div class="t" style="left:384px;top:683px;color:#087c08;letter-spacing:.25px">-0.14%</div>
<div class="t" style="left:430px;top:683px;color:#087c08;letter-spacing:.25px">5542.3</div>

<div class="b" style="left:470px;top:683px;width:14px;height:15px"></div>
<div class="a" style="left:474px;top:687px;width:0;height:0;border:3px solid transparent;border-right:4px solid #000;border-left:0"></div>
<div class="a" style="left:485px;top:683px;width:684px;height:15px;box-sizing:border-box;background:#d4d0c8;border-bottom:2px solid #404040;border-right:1px solid #404040;border-top:1px solid #fff"></div>
<div class="a" style="left:1169px;top:683px;width:9px;height:15px;background:#ece9e4"></div>
<div class="b" style="left:1178px;top:683px;width:14px;height:15px"></div>
<div class="a" style="left:1183px;top:687px;width:0;height:0;border:3px solid transparent;border-left:4px solid #000;border-right:0"></div>

<svg class="a" style="left:1208px;top:681px" width="20" height="18" viewBox="0 0 20 18" fill="none">
<path d="M9.500 6L5 17h9z" stroke="#1a2a90" stroke-width="1.300"/><path d="M6 14h7M7 10.500h5" stroke="#1a2a90"/>
<path d="M5 1q-2 3 0 6M14 1q2 3 0 6M7 2q-1 2 0 4M12 2q1 2 0 4" stroke="#d01818"/><circle cx="9.500" cy="4" r="1.500" fill="#d01818"/>
</svg>
<div class="t" style="left:1228px;top:683px;color:#222"><span>收</span><span style="font:13px/14px 'Liberation Sans',sans-serif;letter-spacing:.3px">301030</span><span>分笔</span></div>

<div class="g" style="left:4px;top:705px;height:17px"></div>
<div class="a" style="left:10px;top:703px;width:1343px;height:20px;box-sizing:border-box;border:1px solid;border-color:#808080 #fff #fff #808080"></div>
<div class="a" style="left:1356px;top:703px;width:1px;height:20px;background:#fff"></div>
<div class="a" style="left:0;top:724px;width:1360px;height:1px;background:#fff"></div>
<div class="t" style="left:12px;top:707px;color:#111"><i>[</i>五月十九<i>] </i>时间<i>:20230706 </i>开<i>:64.0100 </i>高<i>:65.3100 </i>低<i>:63.0500 </i>收<i>:63.8500 </i>手<i>:31605 </i>额<i>:203291328.00 </i>换<i>:0.00 </i>张<i>:-0.23 </i>盘<i>:0 </i>标<i>:63.1096</i></div>

</body></html>
